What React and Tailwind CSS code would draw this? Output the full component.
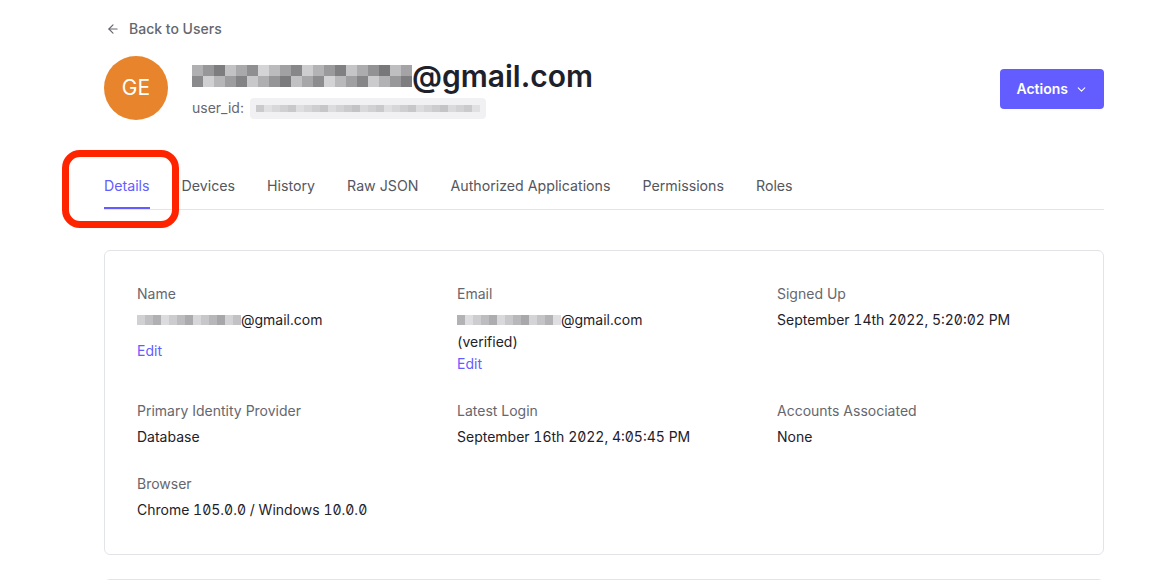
import React from 'react';
import { ArrowLeft, ChevronDown } from 'lucide-react';

// deterministic gray squares standing in for the blurred text
const Blur = ({ cols, rows, cell, cellH, seed = 1, min = 130, max = 215, className = '' }) => {
  const h = cellH || cell;
  const shade = (i) => {
    const r = (((i * 7919 + seed * 104729) * 2654435761) % 1000003) / 1000003;
    return Math.round(min + Math.abs(r) * (max - min));
  };
  return (
    <div className={`flex flex-col ${className}`}>
      {Array.from({ length: rows }).map((_, r) => (
        <div key={r} className="flex">
          {Array.from({ length: cols }).map((_, c) => {
            const v = shade(r * cols + c + 7);
            return (
              <div
                key={c}
                style={{ width: cell, height: h, backgroundColor: `rgb(${v},${v},${v + 3})` }}
              />
            );
          })}
        </div>
      ))}
    </div>
  );
};

const tabs = ['Details', 'Devices', 'History', 'Raw JSON', 'Authorized Applications', 'Permissions', 'Roles'];

const Field = ({ label, children }) => (
  <div className="flex flex-col">
    <div className="text-sm leading-5 text-[#65676e]">{label}</div>
    <div className="mt-[5px] text-sm leading-[22px] text-[#1e212a] slashed-zero tabular-nums">{children}</div>
  </div>
);

const BlurEmail = ({ seed }) => (
  <span className="inline-flex items-center">
    <Blur cols={13} rows={1} cell={8} cellH={10} seed={seed} min={165} max={225} />
    <span>@gmail.com</span>
  </span>
);

export default function App() {
  return (
    <div className="min-h-screen bg-white font-['Inter','Liberation_Sans',sans-serif] text-[#1e212a]">
      <div className="ml-[104px] w-[1000px] pt-[19px]">
        <a className="flex items-center gap-[9px] text-sm font-medium leading-5 text-[#65676e]">
          <ArrowLeft size={14} strokeWidth={2} className="ml-[2px]" />
          Back to Users
        </a>

        <div className="mt-[17px] flex items-center justify-between">
          <div className="flex items-center gap-6">
            <div className="flex h-16 w-16 items-center justify-center rounded-full bg-[#e8842c] text-[21px] text-white">
              GE
            </div>
            <div className="flex flex-col">
              <div className="flex items-center text-[30px] font-semibold leading-9 text-[#1e212a]">
                <Blur cols={20} rows={2} cell={11} seed={3} min={120} max={215} />
                <span>@gmail.com</span>
              </div>
              <div className="mt-[4px] flex items-center gap-[6px] text-sm text-[#65676e]">
                <span>user_id:</span>
                <div className="flex h-[21px] items-center rounded bg-[#f1f1f3] px-[6px]">
                  <Blur cols={28} rows={1} cell={8} cellH={7} seed={5} min={195} max={225} />
                </div>
              </div>
            </div>
          </div>
          <button className="mt-[2px] flex h-10 items-center gap-[7px] rounded bg-[#635dff] px-4 text-sm font-semibold text-white">
            Actions
            <ChevronDown size={13} strokeWidth={2} />
          </button>
        </div>

        <div className="relative mt-[56px] flex gap-8 border-b border-[#e3e4e8]">
          {tabs.map((t, i) => (
            <div
              key={t}
              className={`pb-[11px] text-[14.2px] leading-5 ${
                i === 0 ? 'border-b-2 border-[#635dff] text-[#635dff]' : 'border-b-2 border-transparent text-[#545660]'
              }`}
            >
              {t}
            </div>
          ))}
          <div className="pointer-events-none absolute left-[-42px] top-[-26px] h-[78px] w-[117px] rounded-[18px] border-[7px] border-[#ff2400]" />
        </div>

        <div className="mt-10 rounded-md border border-[#e3e4e8] px-8 pb-[33px] pt-[33px]">
          <div className="grid grid-cols-3 gap-x-[26px] gap-y-[26px]">
            <Field label="Name">
              <BlurEmail seed={8} />
              <div className="mt-[9px] text-[#635dff]">Edit</div>
            </Field>
            <Field label="Email">
              <BlurEmail seed={11} />
              <div>(verified)</div>
              <div className="text-[#635dff]">Edit</div>
            </Field>
            <Field label="Signed Up">September 14th 2022, 5:20:02 PM</Field>
            <Field label="Primary Identity Provider">Database</Field>
            <Field label="Latest Login">September 16th 2022, 4:05:45 PM</Field>
            <Field label="Accounts Associated">None</Field>
            <Field label="Browser">Chrome 105.0.0 / Windows 10.0.0</Field>
          </div>
        </div>

        <div className="mt-6 h-40 rounded-md border border-[#e3e4e8]" />
      </div>
    </div>
  );
}
